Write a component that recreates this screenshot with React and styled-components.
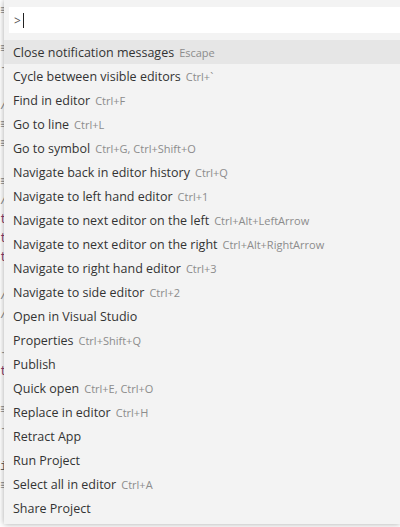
import React from "react";
import styled, { createGlobalStyle } from "styled-components";

const GlobalStyle = createGlobalStyle`
  html, body {
    margin: 0;
    padding: 0;
    background: #ffffff;
  }
  * {
    box-sizing: border-box;
  }
`;

const commands = [
  { label: "Close notification messages", keys: "Escape" },
  { label: "Cycle between visible editors", keys: "Ctrl+`" },
  { label: "Find in editor", keys: "Ctrl+F" },
  { label: "Go to line", keys: "Ctrl+L" },
  { label: "Go to symbol", keys: "Ctrl+G, Ctrl+Shift+O" },
  { label: "Navigate back in editor history", keys: "Ctrl+Q" },
  { label: "Navigate to left hand editor", keys: "Ctrl+1" },
  { label: "Navigate to next editor on the left", keys: "Ctrl+Alt+LeftArrow" },
  { label: "Navigate to next editor on the right", keys: "Ctrl+Alt+RightArrow" },
  { label: "Navigate to right hand editor", keys: "Ctrl+3" },
  { label: "Navigate to side editor", keys: "Ctrl+2" },
  { label: "Open in Visual Studio" },
  { label: "Properties", keys: "Ctrl+Shift+Q" },
  { label: "Publish" },
  { label: "Quick open", keys: "Ctrl+E, Ctrl+O" },
  { label: "Replace in editor", keys: "Ctrl+H" },
  { label: "Retract App" },
  { label: "Run Project" },
  { label: "Select all in editor", keys: "Ctrl+A" },
  { label: "Share Project" },
];

// bits of the code editor that peek out on the left of the palette
const codeLines = [
  ["≡", "#888"], ["", ""], ["≡", "#888"], ["-", "#999"], ["", ""], ["/", "#888"],
  ["≡", "#888"], ["≡", "#888"], ["", ""], ["≡", "#888"], ["/", "#888"],
  ["t", "#8a3c6c"], ["t", "#8a3c6c"], ["t", "#8a3c6c"], ["", ""], ["/", "#888"],
  ["/", "#888"], ["", ""], ["-", "#999"], ["t", "#8a3c6c"], ["", ""],
  ["≡", "#888"], ["-", "#999"], ["", ""], ["i", "#666"], ["≡", "#888"],
];

const Page = styled.div`
  position: relative;
  width: 400px;
  height: 527px;
  overflow: hidden;
  background: #ffffff;
`;

const Editor = styled.div`
  display: flex;
  flex-direction: column;
  padding-top: 2px;
  font-family: "Liberation Mono", monospace;
  font-size: 12px;
  line-height: 19px;
`;

const CodeLine = styled.div`
  height: 19px;
  color: ${(p) => p.color || "#888"};
`;

const Palette = styled.div`
  position: absolute;
  top: 0;
  left: 4px;
  right: 0;
  height: 524px;
  background: #f3f3f3;
  box-shadow: 0 0 6px rgba(0, 0, 0, 0.35);
  font-family: "Open Sans", "Noto Sans", sans-serif;
`;

const InputWrap = styled.div`
  padding: 7px 0 7px 5px;
`;

const Input = styled.div`
  height: 26px;
  background: #ffffff;
  display: flex;
  align-items: center;
  padding-left: 5px;
  font-size: 12px;
  color: #555;
`;

const Caret = styled.span`
  display: inline-block;
  width: 1px;
  height: 15px;
  margin-left: 2px;
  background: #222;
`;

const List = styled.div`
  display: flex;
  flex-direction: column;
`;

const Row = styled.div`
  height: 24px;
  display: flex;
  align-items: center;
  padding-left: 9px;
  white-space: nowrap;
  background: ${(p) => (p.$active ? "#e6e6e6" : "transparent")};
`;

const Label = styled.span`
  font-size: 12.5px;
  color: #333;
`;

const Keys = styled.span`
  font-size: 11px;
  color: #8c8c8c;
  margin-left: 5px;
`;

export default function App() {
  return (
    <Page>
      <GlobalStyle />
      <Editor>
        {codeLines.map(([t, c], i) => (
          <CodeLine key={i} color={c}>{t || "\u00a0"}</CodeLine>
        ))}
      </Editor>
      <Palette>
        <InputWrap>
          <Input>
            &gt;<Caret />
          </Input>
        </InputWrap>
        <List>
          {commands.map((c, i) => (
            <Row key={c.label} $active={i === 0}>
              <Label>{c.label}</Label>
              {c.keys && <Keys>{c.keys}</Keys>}
            </Row>
          ))}
        </List>
      </Palette>
    </Page>
  );
}
